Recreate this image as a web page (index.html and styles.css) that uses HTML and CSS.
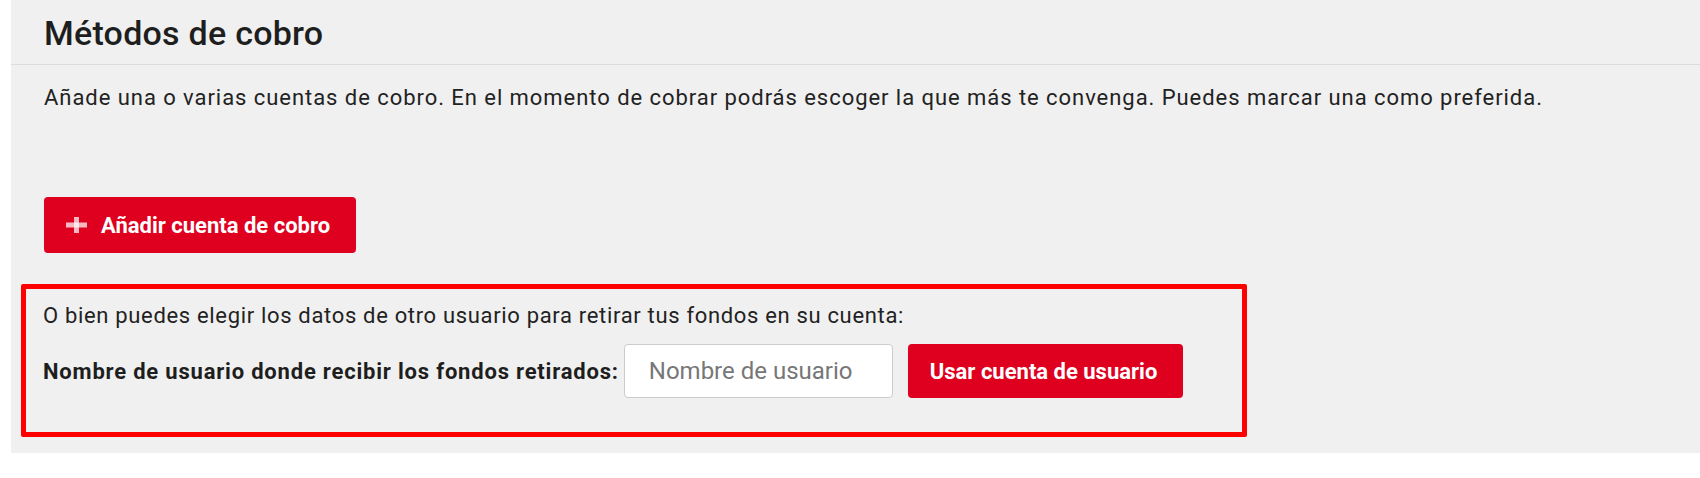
FILE: index.html
```html
<!DOCTYPE html>
<html lang="es">
<head>
<meta charset="utf-8">
<title>Métodos de cobro</title>
<link rel="stylesheet" href="styles.css">
</head>
<body>
<section class="panel">
  <header class="panel-head">
    <h2 class="panel-title">Métodos de cobro</h2>
  </header>
  <div class="panel-body">
    <p class="intro">Añade una o varias cuentas de cobro. En el momento de cobrar podrás escoger la que más te convenga. Puedes marcar una como preferida.</p>
    <button class="btn btn-add" type="button">
      <svg class="plus" width="21" height="16" viewBox="0 0 21 16" aria-hidden="true"><rect x="0" y="5.5" width="21" height="5" fill="currentColor"/><rect x="8" y="0" width="5" height="16" fill="currentColor"/></svg>
      <span>Añadir cuenta de cobro</span>
    </button>
    <div class="alt-box">
      <p class="alt-text">O bien puedes elegir los datos de otro usuario para retirar tus fondos en su cuenta:</p>
      <div class="alt-row">
        <label class="alt-label" for="user">Nombre de usuario donde recibir los fondos retirados:</label>
        <input class="alt-input" id="user" type="text" placeholder="Nombre de usuario">
        <button class="btn btn-use" type="button">Usar cuenta de usuario</button>
      </div>
    </div>
  </div>
</section>
</body>
</html>
```

FILE: styles.css
```css
html, body {
  margin: 0;
  padding: 0;
  background: #ffffff;
}

body {
  font-family: Roboto, "Liberation Sans", Arial, sans-serif;
  color: #222222;
}

.panel {
  margin-left: 11px;
  background: #f0f0f0;
  padding-bottom: 16px;
}

.panel-head {
  padding: 13px 33px 11px;
  border-bottom: 1px solid #dcdcdc;
}

.panel-title {
  margin: 0;
  font-size: 34px;
  line-height: 40px;
  font-weight: 500;
  letter-spacing: 0.25px;
  color: #1e1e1e;
}

.panel-body {
  padding: 0 10px;
}

.intro {
  margin: 18px 23px 0;
  font-size: 22px;
  line-height: 30px;
  letter-spacing: 0.95px;
  color: #222222;
}

.btn {
  display: inline-flex;
  align-items: center;
  border: 0;
  border-radius: 4px;
  background: #de001e;
  color: #ffffff;
  font-family: Roboto, "Liberation Sans", Arial, sans-serif;
  font-weight: 700;
  font-size: 22px;
  cursor: pointer;
}

.btn-add {
  margin: 84px 0 0 23px;
  height: 56px;
  width: 312px;
  padding: 0 0 0 22px;
  gap: 14px;
}

.plus {
  color: rgba(255, 255, 255, 0.72);
  flex: none;
}

.alt-box {
  box-sizing: border-box;
  margin-top: 31px;
  width: 1226px;
  border: 5px solid #ff0000;
  border-radius: 2px;
  padding: 12px 17px 34px;
}

.alt-text {
  margin: 0;
  font-size: 22px;
  line-height: 30px;
  letter-spacing: 0.67px;
  color: #222222;
}

.alt-row {
  display: flex;
  align-items: center;
  margin-top: 13px;
}

.alt-label {
  font-size: 22px;
  font-weight: 700;
  letter-spacing: 0.8px;
  color: #1e1e1e;
  margin-right: 5px;
}

.alt-input {
  box-sizing: border-box;
  width: 269px;
  height: 54px;
  border: 1px solid #cccccc;
  border-radius: 4px;
  background: #ffffff;
  padding: 0 24px;
  font-family: Roboto, "Liberation Sans", Arial, sans-serif;
  font-size: 24px;
  color: #333333;
}

.alt-input::placeholder {
  color: #777777;
}

.btn-use {
  margin-left: 15px;
  height: 54px;
  width: 275px;
  padding: 0 22px;
}
```
